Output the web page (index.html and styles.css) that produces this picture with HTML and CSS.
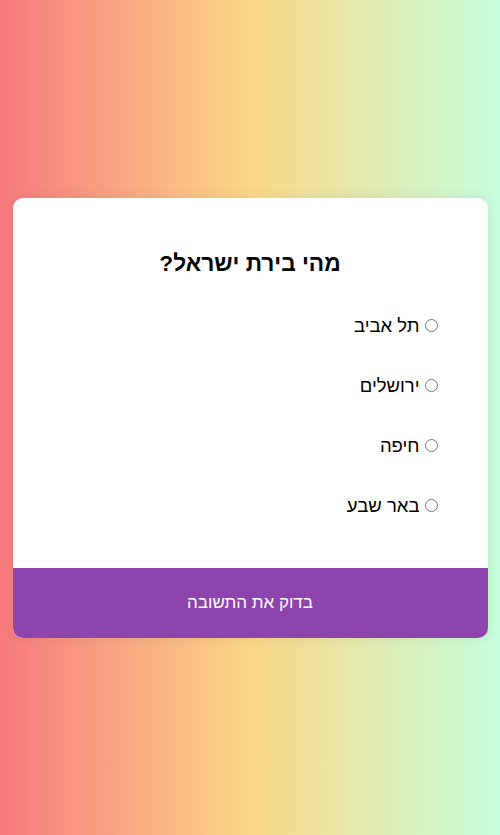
FILE: index.html
```html
<!DOCTYPE html>
<html lang="he" dir="rtl">
<head>
<meta charset="utf-8">
<title>חידון</title>
<link rel="stylesheet" href="styles.css">
</head>
<body>
<div class="quiz-container">
  <div class="quiz-header">
    <h2 class="question">מהי בירת ישראל?</h2>
    <ul class="answers">
      <li><input type="radio" name="answer" id="a"><label for="a">תל אביב</label></li>
      <li><input type="radio" name="answer" id="b"><label for="b">ירושלים</label></li>
      <li><input type="radio" name="answer" id="c"><label for="c">חיפה</label></li>
      <li><input type="radio" name="answer" id="d"><label for="d">באר שבע</label></li>
    </ul>
  </div>
  <button class="submit">בדוק את התשובה</button>
</div>
</body>
</html>
```
FILE: styles.css
```css
* { box-sizing: border-box; }
body {
  margin: 0;
  height: 100vh;
  display: flex;
  align-items: center;
  justify-content: center;
  background: linear-gradient(to right, #f7797d, #fbd786, #c6ffdd);
  font-family: "Liberation Sans", Arial, sans-serif;
}
.quiz-container {
  background: #fff;
  width: 95%;
  border-radius: 10px;
  box-shadow: 0 0 10px 2px rgba(100, 100, 100, 0.1);
  overflow: hidden;
}
.quiz-header {
  padding: 32px 47px 32px;
}
.question {
  font-size: 22.7px;
  text-align: center;
  margin: 20px 0 19px;
  color: #000;
}
.answers {
  list-style: none;
  padding: 0;
  margin: 0;
}
.answers li {
  font-size: 18.5px;
  height: 60px;
  display: flex;
  align-items: center;
}
.answers input {
  margin: 0 3px 0 5px;
  width: 13px;
  height: 13px;
}
.submit {
  display: block;
  width: 100%;
  border: none;
  background: #8e44ad;
  color: #fff;
  font-family: inherit;
  font-size: 17px;
  height: 70px;
  cursor: pointer;
}
```
